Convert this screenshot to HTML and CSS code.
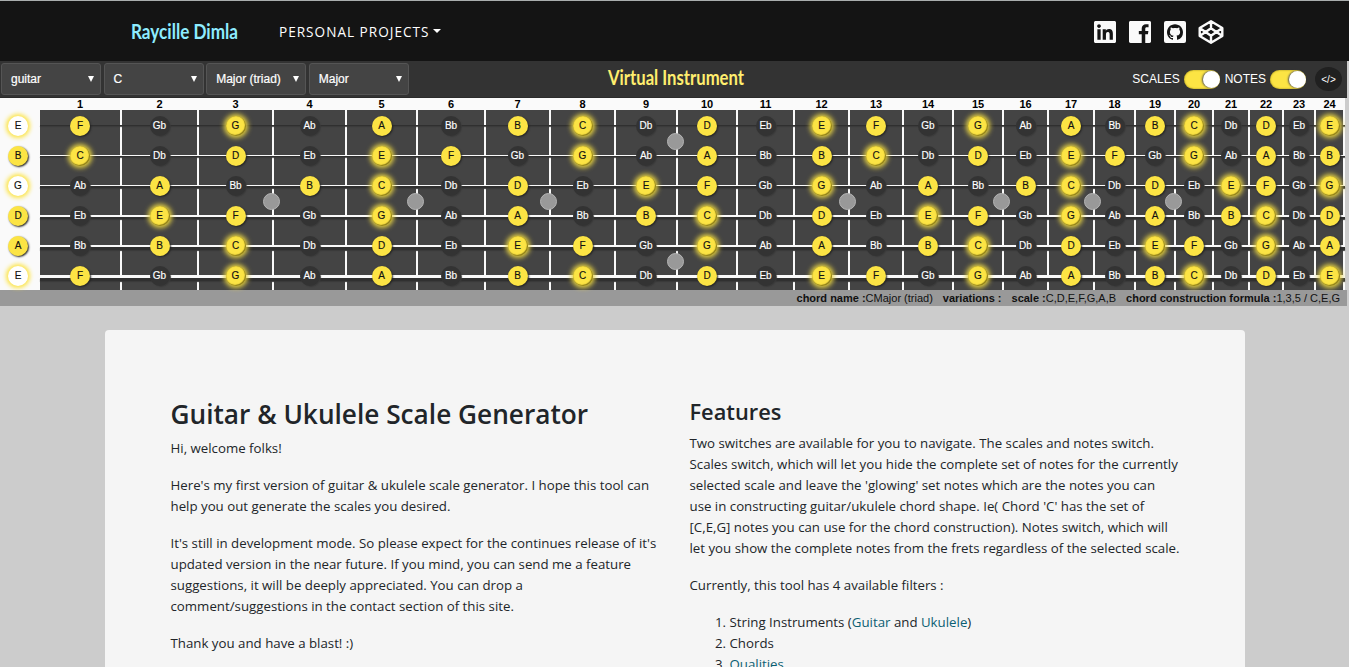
FILE: index.html
```html
<!DOCTYPE html>
<html lang="en">
<head>
<meta charset="utf-8">
<title>Virtual Instrument</title>
<link rel="stylesheet" href="styles.css">
</head>
<body>
<nav class="navbar">
  <svg class="brand" width="110" height="34"><text x="1" y="24" textLength="107" lengthAdjust="spacingAndGlyphs">Raycille Dimla</text></svg>
  <a class="nav-link">PERSONAL PROJECTS<span class="caret"></span></a>
  <div class="social">
    <svg width="22" height="22" viewBox="0 32 448 448"><path d="M416 32H31.9C14.3 32 0 46.5 0 64.3v383.4C0 465.500 14.300 480 31.900 480H416c17.600 0 32-14.500 32-32.300V64.300c0-17.800-14.400-32.300-32-32.300zM135.400 416H69V202.200h66.500V416zm-33.200-243c-21.300 0-38.500-17.300-38.500-38.500S80.900 96 102.200 96c21.200 0 38.500 17.300 38.500 38.500 0 21.300-17.200 38.500-38.500 38.500zm282.100 243h-66.400V312c0-24.800-.5-56.700-34.500-56.700-34.600 0-39.900 27-39.900 54.900V416h-66.400V202.200h63.700v29.200h.9c8.900-16.800 30.600-34.500 62.900-34.500 67.200 0 79.700 44.300 79.700 101.900V416z"/></svg>
    <svg width="22" height="22" viewBox="0 32 448 448"><path d="M448 62v388c0 16-14 30-30 30h-87V302.800h55l8.700-67.600H331V192c0-19.600 5.400-32.900 33.500-32.900H398V98.700c-6.200-.8-27.400-2.700-52.200-2.700-51.600 0-87 31.500-87 89.400v49.900H200v67.600h58.900V480H30c-16 0-30-14-30-30V62c0-16 14-30 30-30h388c16 0 30 14 30 30z"/></svg>
    <svg width="22" height="22" viewBox="0 0 22 22"><rect width="22" height="22" rx="2"/><path class="ink" transform="translate(3 3.200)" d="M8 0C3.580 0 0 3.580 0 8c0 3.540 2.290 6.530 5.470 7.590.4.070.55-.17.55-.38 0-.19-.01-.82-.01-1.490-2.010.37-2.530-.49-2.690-.94-.09-.23-.48-.94-.82-1.130-.28-.15-.68-.52-.01-.53.63-.01 1.080.58 1.230.82.72 1.210 1.870.87 2.330.66.070-.52.280-.87.510-1.070-1.780-.2-3.640-.89-3.640-3.950 0-.87.310-1.590.820-2.150-.08-.2-.36-1.020.08-2.120 0 0 .67-.21 2.200.82.640-.18 1.320-.27 2-.27.680 0 1.360.09 2 .27 1.530-1.040 2.200-.82 2.200-.82.440 1.100.160 1.920.080 2.120.510.56.820 1.270.820 2.150 0 3.070-1.870 3.750-3.650 3.950.290.25.540.73.540 1.480 0 1.070-.01 1.930-.01 2.200 0 .21.150.46.550.38A8.013 8.013 0 0016 8c0-4.420-3.580-8-8-8z"/></svg>
    <svg class="codepen" width="26" height="24" viewBox="0 0 26 24"><path d="M13 1.300 24.300 8v8L13 22.700 1.700 16V8zM13 1.300V8.200M13 15.800v6.900M1.700 8 13 15.800 24.300 8M1.700 16 13 8.200 24.300 16"/></svg>
  </div>
</nav>

<main class="page">
  <section class="instrument">
    <div class="toolbar">
      <div class="select">guitar<i></i></div>
      <div class="select">C<i></i></div>
      <div class="select">Major (triad)<i></i></div>
      <div class="select">Major<i></i></div>
      <svg class="title" width="142" height="32"><text x="2" y="22" textLength="136" lengthAdjust="spacingAndGlyphs">Virtual Instrument</text></svg>
      <div class="switches">
        <span>SCALES</span><b class="switch"></b>
        <span>NOTES</span><b class="switch"></b>
        <span class="code">&lt;/&gt;</span>
      </div>
    </div>
    <div class="neck">
      <div class="open" id="open"></div>
      <div class="frets" id="frets"></div>
      <div class="strings" id="strings"></div>
    </div>
    <div class="info">
      <span><b>chord name :</b>CMajor (triad)</span>
      <span><b>variations :</b></span>
      <span><b>scale :</b>C,D,E,F,G,A,B</span>
      <span><b>chord construction formula :</b>1,3,5 / C,E,G</span>
    </div>
  </section>

  <article class="card">
    <div class="col">
      <h1>Guitar &amp; Ukulele Scale Generator</h1>
      <p>Hi, welcome folks!</p>
      <p>Here's my first version of guitar &amp; ukulele scale generator. I hope this tool can<br>help you out generate the scales you desired.</p>
      <p>It's still in development mode. So please expect for the continues release of it's<br>updated version in the near future. If you mind, you can send me a feature<br>suggestions, it will be deeply appreciated. You can drop a<br>comment/suggestions in the contact section of this site.</p>
      <p>Thank you and have a blast! :)</p>
    </div>
    <div class="col">
      <h2>Features</h2>
      <p>Two switches are available for you to navigate. The scales and notes switch.<br>Scales switch, which will let you hide the complete set of notes for the currently<br>selected scale and leave the 'glowing' set notes which are the notes you can<br>use in constructing guitar/ukulele chord shape. Ie( Chord 'C' has the set of<br>[C,E,G] notes you can use for the chord construction). Notes switch, which will<br>let you show the complete notes from the frets regardless of the selected scale.</p>
      <p>Currently, this tool has 4 available filters :</p>
      <ol>
        <li>String Instruments (<a>Guitar</a> and <a>Ukulele</a>)</li>
        <li>Chords</li>
        <li><a>Qualities</a></li>
      </ol>
    </div>
  </article>
</main>
<script src="fretboard.js"></script>
</body>
</html>
```
FILE: styles.css
```css
* { box-sizing: border-box; }
html, body { height: 100%; }
body { margin: 0; overflow: hidden; background: #ccc; color: #212529; font: 13.270px/21px "Open Sans", "Noto Sans", sans-serif; }

.navbar { height: 61px; padding: 2px 126px 0 130px; background: #141414; border-top: 1px solid #a9adad; display: flex; align-items: center; }
.brand, .title { overflow: visible; }
.brand text, .title text { font: 700 21px Lato, sans-serif; fill: #8eecff; }
.nav-link { margin: 0 0 2px 39px; color: #fff; font-size: 13.600px; letter-spacing: 1px; white-space: nowrap; display: flex; align-items: center; }
.caret { margin: 0 0 0 4px; border: 4px solid transparent; border-top-color: #fff; border-bottom: 0; }
.social { margin-left: auto; display: flex; align-items: center; gap: 13px; fill: #fafafa; }
.social svg { display: block; }
.social .ink { fill: #141414; }
.social .codepen { fill: none; stroke: #fafafa; stroke-width: 2.4; stroke-linejoin: round; margin: 0 -1px; }

.instrument { width: 1347px; font-family: "Liberation Sans", Arial, sans-serif; }
.toolbar { height: 37px; background: #333; display: flex; align-items: center; gap: 2.600px; padding-left: 1px; border-bottom: 1px solid #2b2b2b; }
.select { width: 100px; height: 32px; padding: 0 6px 0 9px; background: #444; border: 1px solid #555; border-radius: 3px; color: #fff; font-size: 12px; display: flex; align-items: center; justify-content: space-between; -webkit-text-stroke: .2px #fff; }
.select i { border: 3px solid transparent; border-top: 6px solid #fff; border-bottom: 0; }
.title { margin-left: 195px; }
.title text { fill: #ffee6e; }
.switches { margin-left: auto; display: flex; align-items: center; color: #fff; font-size: 12px; padding-right: 5px; }
.switch { width: 36px; height: 19px; margin: 0 5px 0 4px; border-radius: 10px; background: #fce444; box-shadow: inset 0 0 2px #8a7a10; display: flex; justify-content: flex-end; align-items: center; }
.switch::after { content: ""; width: 17px; height: 17px; border-radius: 50%; background: #fff; box-shadow: -1px 0 2px #555; }
.code { width: 27px; height: 24px; margin-left: 4px; border-radius: 50%; background: #202020; font-size: 10px; display: flex; align-items: center; justify-content: center; }

.neck { width: 1345px; height: 192px; background: #fafafa; display: flex; position: relative; }
.open { flex: none; width: 40px; padding: 12px 0 0 8px; }
.open .cell { justify-content: flex-start; }
.frets { flex: none; display: flex; }
.fret { flex: none; border-right: 2px solid #fafafa; background: #444; position: relative; }
.number { height: 12px; margin-right: -2px; padding-right: 2px; background: #fafafa; color: #000; font: bold 11px/13px "Liberation Sans", Arial, sans-serif; text-align: center; }
.cell { height: 30px; padding-top: 2px; display: flex; align-items: center; justify-content: center; }
.note { position: relative; z-index: 3; width: 20px; height: 20px; border-radius: 50%; background: #333; color: #fff; box-shadow: 1px 1px 1px #3a3a3a; font-size: 10px; line-height: 20px; text-align: center; -webkit-text-stroke: .15px; }
.note.scale { background: #fce444; color: #111; box-shadow: 1px 1px 2px #222; }
.note.chord { box-shadow: inset -1px -1px 1px #8c7d19, inset 0 0 1px #8c7d19, 0 0 5px 2px #e6d243; }
.open .note.chord { background: #fff; box-shadow: 0 0 4px 2px #fce444; }
.marker { position: absolute; z-index: 2; right: -8px; width: 17px; height: 17px; border-radius: 50%; background: #999; border: 1px solid #b5b5b5; }

/* Strings run across every fret; the lower ones are thicker. */
.strings { position: absolute; left: 40px; right: 0; top: 27px; z-index: 1; }
.string { height: 30px; }
.string::before { content: ""; display: block; background: #fafafa; }
.string::after { content: ""; display: block; background: #303030; box-shadow: 0 1px 1px #3a3a3a; }
.s1::after, .s2::before, .s2::after, .s3::before { height: 1px; }
.s3::after, .s4::before, .s4::after, .s5::before { height: 2px; }
.s5::after, .s6::before, .s6::after { height: 3px; }

.info { height: 16px; padding: 1px 7px 0 0; background: #999; color: #111; font-size: 11px; line-height: 15px; display: flex; justify-content: flex-end; gap: 10px; white-space: nowrap; }

.card { width: 1140px; height: 337px; margin: 24px 0 0 105px; padding: 67px 65.500px 0; background: #f5f5f5; border-radius: 4px 4px 0 0; display: flex; gap: 30px; }
.col { width: 489px; white-space: nowrap; }
h1, h2 { margin: 0 0 7px; font-weight: 600; line-height: 34px; }
h1 { font-size: 26.220px; }
h2 { font-size: 21.800px; line-height: 29px; }
p { margin: 0 0 16px; }
ol { margin: 0; padding-left: 40px; }
a { color: #0b5f73; }
```
FILE: fretboard.js
```javascript
const CHROMATIC = ["C", "Db", "D", "Eb", "E", "F", "Gb", "G", "Ab", "A", "Bb", "B"];
const SCALE = ["C", "D", "E", "F", "G", "A", "B"];
const CHORD = ["C", "E", "G"];
const TUNING = ["E", "B", "G", "D", "A", "E"];
const WIDTHS = [82, 77, 75, 73, 71, 68, 65, 65, 62, 60, 57, 55, 54, 50, 50, 45, 46, 41, 40, 38, 36, 34, 32, 29];
const MARKERS = { 3: [95], 5: [95], 7: [95], 9: [35, 155], 12: [95], 15: [95], 17: [95], 19: [95] };

function cell(name, open) {
  const chord = CHORD.includes(name) && !(open && name === "C");
  const kind = (SCALE.includes(name) ? " scale" : "") + (chord ? " chord" : "");
  return `<div class="cell"><div class="note${kind}">${name}</div></div>`;
}

document.getElementById("open").innerHTML = TUNING.map(name => cell(name, true)).join("");

document.getElementById("frets").innerHTML = WIDTHS.map((width, i) => {
  const fret = i + 1;
  const cells = TUNING.map(open => cell(CHROMATIC[(CHROMATIC.indexOf(open) + fret) % 12], false)).join("");
  const markers = (MARKERS[fret] || []).map(top => `<span class="marker" style="top:${top}px"></span>`).join("");
  return `<div class="fret" style="width:${width}px"><div class="number">${fret}</div>${cells}${markers}</div>`;
}).join("");

document.getElementById("strings").innerHTML = TUNING.map((_, i) => `<div class="string s${i + 1}"></div>`).join("");
```
